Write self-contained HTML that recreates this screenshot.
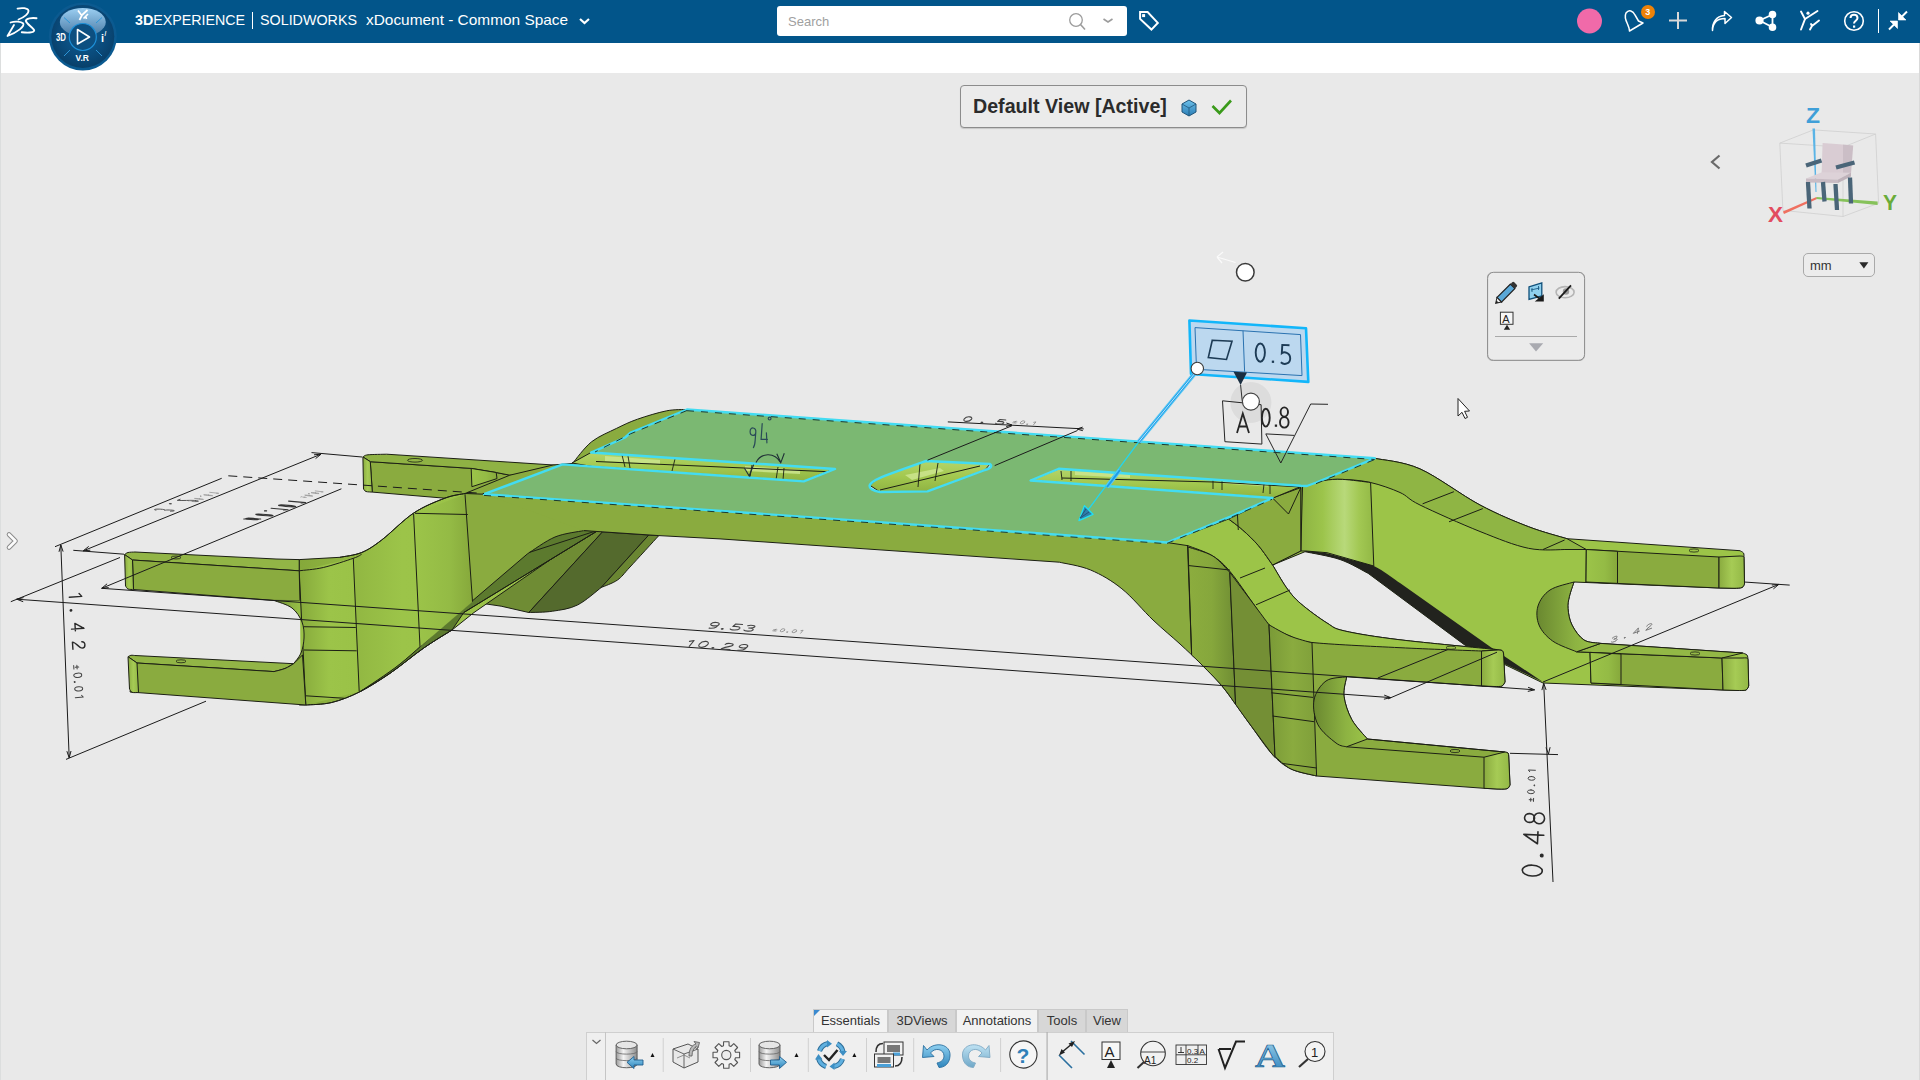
<!DOCTYPE html>
<html><head><meta charset="utf-8">
<style>
*{margin:0;padding:0;box-sizing:border-box}
html,body{width:1920px;height:1080px;overflow:hidden;background:#e9e9e9;font-family:"Liberation Sans",sans-serif}
#hdr{position:absolute;left:0;top:0;width:1920px;height:43px;background:#02558a}
#wbar{position:absolute;left:0;top:43px;width:1920px;height:30px;background:#fff}
.abs{position:absolute}
.t{position:absolute;color:#fff;font-size:16px;white-space:nowrap;line-height:16px}
#search{position:absolute;left:777px;top:6px;width:350px;height:30px;background:#fff;border-radius:3px}
#search span{position:absolute;left:11px;top:8px;font-size:13px;color:#a0a0a0}
#dv{position:absolute;left:960px;top:85px;width:287px;height:43px;border:1px solid #8c8c8c;border-radius:4px;background:#ebebeb;box-shadow:0 1px 1px rgba(0,0,0,0.15)}
#dv span{position:absolute;left:12px;top:9px;font-size:20px;font-weight:bold;color:#2b2b2b;transform:scaleX(0.982);transform-origin:0 0;white-space:nowrap}
#tabs{position:absolute;left:813px;top:1009px;height:23px}
.tab{position:absolute;top:0;height:23px;font-size:13px;color:#333;padding-top:3px;text-align:center;border:1px solid #c9c9c9;border-bottom:none}
#tb{position:absolute;left:586px;top:1032px;width:748px;height:48px;background:#efefef;border:1px solid #cfcfcf;border-bottom:none}
#mm{position:absolute;left:1803px;top:253px;width:72px;height:24px;border:1px solid #a9a9a9;border-radius:5px;background:#ececec}
#mm span{position:absolute;left:6px;top:4px;font-size:13px;color:#333}
#ctx{position:absolute;left:1487px;top:272px;width:98px;height:89px;border:1px solid #b5b5b5;border-radius:5px;background:#ececec}
</style></head><body>
<div id="hdr"></div>
<div id="wbar"></div>
<div id="lb" class="abs" style="left:0;top:43px;width:1px;height:1037px;background:#dcdede"></div>
<div class="abs" style="left:1919px;top:43px;width:1px;height:1037px;background:#d9d9d9"></div>
<svg class="abs" style="left:0;top:0" width="1920" height="1080" viewBox="0 0 1920 1080">
<defs>
 <linearGradient id="gBody" x1="0" y1="0" x2="1" y2="0"><stop offset="0" stop-color="#85a83a"/><stop offset="0.35" stop-color="#9cc449"/><stop offset="1" stop-color="#98bf47"/></linearGradient>
 <linearGradient id="gA1" x1="0" y1="0" x2="1" y2="0"><stop offset="0" stop-color="#86a93b"/><stop offset="0.5" stop-color="#9cc449"/><stop offset="1" stop-color="#9ac247"/></linearGradient>
 <linearGradient id="gA2" x1="0" y1="0" x2="1" y2="0"><stop offset="0" stop-color="#9cc449"/><stop offset="0.6" stop-color="#94bb45"/><stop offset="1" stop-color="#86a83b"/></linearGradient>
 <linearGradient id="gCyl" x1="0" y1="0" x2="1" y2="0"><stop offset="0" stop-color="#8db342"/><stop offset="0.3" stop-color="#9cc44b"/><stop offset="0.6" stop-color="#b8d97a"/><stop offset="0.8" stop-color="#a2c853"/><stop offset="1" stop-color="#92b845"/></linearGradient>
 <linearGradient id="gFR1" x1="0" y1="0" x2="1" y2="0"><stop offset="0" stop-color="#8cad3e"/><stop offset="0.5" stop-color="#86a73c"/><stop offset="1" stop-color="#6f8d33"/></linearGradient>
 <linearGradient id="gFR3" x1="0" y1="0" x2="1" y2="0"><stop offset="0" stop-color="#7a9a37"/><stop offset="0.5" stop-color="#8aab3f"/><stop offset="1" stop-color="#7f9f3a"/></linearGradient>
 <linearGradient id="gU" x1="0" y1="0" x2="1" y2="0"><stop offset="0" stop-color="#6a8830"/><stop offset="0.6" stop-color="#8db342"/><stop offset="1" stop-color="#9cc448"/></linearGradient>
 <linearGradient id="gCap" x1="0" y1="0" x2="1" y2="0"><stop offset="0" stop-color="#8aab3f"/><stop offset="0.5" stop-color="#a6cb55"/><stop offset="1" stop-color="#93b846"/></linearGradient>
 <linearGradient id="gSlot" x1="0" y1="0" x2="0" y2="1"><stop offset="0" stop-color="#b4d46a"/><stop offset="0.5" stop-color="#a3c84f"/><stop offset="1" stop-color="#8fb342"/></linearGradient>
</defs>
<g stroke="#1c1f14" stroke-width="1" stroke-linejoin="round">
<path fill="#6f8c34" d="M463.8,612.5 L598.8,530.0 L602.5,531.9 L528.8,612.5 L501.2,606.2 L485.0,603.8 Z"/>
<path fill="#546a2d" d="M602.5,531.9 L648.8,535.0 L601.2,587.5 L601.2,587.5 C597.3,590.4 585.6,601.0 577.5,605.0 C569.4,609.0 560.6,610.0 552.5,611.2 C544.4,612.5 532.7,612.3 528.8,612.5 Z"/>
<path fill="#6a8632" d="M648.8,535.0 L658.8,535.6 L658.8,535.6 C654.0,540.8 636.9,559.6 630.0,567.0 C623.1,574.4 622.3,576.6 617.5,580.0 C612.7,583.4 604.0,586.2 601.2,587.5 Z"/>
<path fill="#8aab3f" d="M370.3,461.7 L471.2,468.4 L496.2,472.5 L509.8,475.2 L600.0,480.0 L600.0,505.0 L444.8,498.2 L372.3,492.1 Z"/>
<path fill="#8fb244" d="M362.9,456.9 C363.8,456.5 364.1,455.2 368.0,454.8 C371.9,454.4 383.5,454.3 386.6,454.2 L600.0,468.0 L600.0,478.0 L509.8,475.2 L496.2,472.5 L471.2,468.4 L370.3,461.7 Z"/>
<path fill="url(#gCap)" d="M362.9,456.9 L363.5,489.0 L363.5,489.0 C363.9,489.4 364.5,491.0 366.0,491.5 C367.5,492.0 371.2,492.0 372.3,492.1 L370.3,461.7 Z"/>
<path fill="url(#gA2)" d="M471.2,468.4 L496.2,472.5 L497.0,478.6 L471.9,486.7 Z"/>
<ellipse cx="415" cy="460.3" rx="7.5" ry="1.8" fill="#93b646" stroke-width="0.8"/>
<path fill="#9cc448" d="M1200.0,456.0 L1340.0,456.0 L1374.7,458.3 C1382.2,460.1 1402.5,461.1 1420.0,468.9 C1437.5,476.7 1461.9,495.4 1480.0,505.0 C1498.1,514.6 1514.0,521.1 1528.5,526.7 C1543.0,532.3 1560.6,536.7 1567.0,538.7 L1740.0,550.7 L1740.0,550.7 C1740.6,551.1 1742.8,552.0 1743.5,553.0 C1744.2,554.0 1743.9,556.3 1744.0,557.0 L1744.5,584.0 L1744.5,584.0 C1744.1,584.6 1743.6,586.8 1742.0,587.5 C1740.4,588.2 1736.2,588.2 1735.0,588.3 L1719.0,588.0 L1574.0,582.0 L1574.0,582.0 C1573.2,584.4 1570.4,592.1 1569.4,596.5 C1568.4,600.9 1567.6,603.8 1568.0,608.5 C1568.4,613.2 1569.3,619.8 1572.0,625.0 C1574.7,630.2 1579.2,636.9 1584.0,640.0 C1588.8,643.1 1597.9,642.8 1600.7,643.4 L1742.7,653.0 L1742.7,653.0 C1743.4,653.3 1746.1,654.0 1747.0,655.0 C1747.9,656.0 1747.8,658.3 1748.0,659.0 L1748.7,686.0 L1748.7,686.0 C1748.2,686.7 1747.8,689.2 1746.0,690.0 C1744.2,690.8 1739.3,690.4 1738.0,690.5 L1723.0,690.0 L1543.0,683.0 L1465.7,645.7 L1368.1,573.3 L1368.1,573.3 C1363.4,571.0 1350.5,563.1 1340.0,559.5 C1329.5,555.9 1310.8,553.0 1305.0,551.7 L1272.6,565.0 L1200.0,560.0 Z"/>
<path fill="#8fb544" d="M1302.5,486.9 C1306.0,485.8 1317.1,481.9 1323.8,480.6 C1330.4,479.4 1334.7,479.1 1342.5,479.4 C1350.3,479.7 1361.0,480.3 1370.6,482.5 C1380.2,484.7 1391.8,488.8 1400.0,492.5 C1408.2,496.2 1406.7,498.5 1420.0,505.0 C1433.3,511.5 1461.9,524.3 1480.0,531.5 C1498.1,538.7 1514.0,545.3 1528.5,548.3 C1543.0,551.3 1560.6,549.3 1567.0,549.5 L1586.3,549.5 L1567.0,538.7 L1567.0,538.7 C1560.6,536.7 1543.0,532.3 1528.5,526.7 C1514.0,521.1 1498.1,514.6 1480.0,505.0 C1461.9,495.4 1437.5,476.7 1420.0,468.9 C1402.5,461.1 1382.2,460.1 1374.7,458.3 L1316.2,482.5 Z"/>
<path fill="#8aab3f" d="M1586.3,549.5 L1719.0,557.0 L1719.0,588.0 L1586.0,582.0 Z"/>
<path fill="url(#gA2)" d="M1586.3,549.5 L1617.5,551.3 L1617.5,583.4 L1586.0,582.0 Z"/>
<path fill="#8aab3f" d="M1590.0,652.4 L1722.0,658.0 L1723.0,690.0 L1591.0,683.0 Z"/>
<path fill="none" d="M1576.6,651.8 L1590.0,652.4"/>
<path fill="#93b846" d="M1576.6,651.8 L1600.7,643.4 L1742.7,653.0 L1722.0,658.0 Z"/>
<path fill="url(#gA2)" d="M1590.0,652.4 L1621.0,654.0 L1621.0,684.5 L1591.0,683.0 Z"/>
<path fill="url(#gCap)" d="M1719.0,557.0 L1740.0,556.0 L1740.0,556.0 C1740.6,556.1 1742.8,556.0 1743.5,556.5 C1744.2,557.0 1743.9,558.6 1744.0,559.0 L1744.5,584.0 L1744.5,584.0 C1744.1,584.6 1743.6,586.8 1742.0,587.5 C1740.4,588.2 1736.2,588.2 1735.0,588.3 L1719.0,588.0 Z"/>
<path fill="url(#gCap)" d="M1722.0,658.0 L1742.0,658.0 L1742.0,658.0 C1742.8,658.0 1746.0,657.7 1747.0,658.0 C1748.0,658.3 1747.8,659.7 1748.0,660.0 L1748.7,686.0 L1748.7,686.0 C1748.2,686.7 1747.8,689.2 1746.0,690.0 C1744.2,690.8 1739.3,690.4 1738.0,690.5 L1723.0,690.0 Z"/>
<path fill="url(#gU)" d="M1574.0,582.0 C1570.0,583.3 1556.0,586.0 1550.0,590.0 C1544.0,594.0 1539.8,600.2 1538.0,606.0 C1536.2,611.8 1536.6,619.2 1539.0,625.0 C1541.4,630.8 1546.3,636.5 1552.6,641.0 C1558.9,645.5 1572.6,650.0 1576.6,651.8 L1600.7,643.4 L1600.7,643.4 C1597.9,642.8 1588.8,643.1 1584.0,640.0 C1579.2,636.9 1574.7,630.2 1572.0,625.0 C1569.3,619.8 1568.4,613.2 1568.0,608.5 C1567.6,603.8 1568.4,600.9 1569.4,596.5 C1570.4,592.1 1573.2,584.4 1574.0,582.0 Z"/>
<path fill="#22231e" stroke="none" d="M1306.7,550.8 C1310.0,551.2 1319.2,551.8 1326.7,553.3 C1334.2,554.8 1343.8,557.9 1351.7,560.0 C1359.7,562.1 1366.4,562.4 1374.4,566.2 C1382.5,570.0 1395.7,580.2 1400.0,583.0 L1490.9,647.3 L1543.0,682.0 L1465.7,645.7 L1368.1,573.3 L1368.1,573.3 C1363.4,571.0 1350.5,563.1 1340.0,559.5 C1329.5,555.9 1310.8,553.0 1305.0,551.7 Z"/>
<path fill="url(#gCyl)" d="M1302.5,486.9 C1306.0,485.8 1317.1,481.9 1323.8,480.6 C1330.4,479.4 1334.7,479.1 1342.5,479.4 C1350.3,479.7 1365.9,482.0 1370.6,482.5 L1373.8,566.0 L1327.0,552.7 L1306.0,551.0 L1300.8,551.0 Z"/>
<path fill="none" d="M1422.6,503.8 L1453.9,491.7"/>
<path fill="none" d="M1449.0,521.8 L1482.8,508.6"/>
<path fill="none" d="M1543.0,549.5 L1564.6,540.0"/>
<ellipse cx="1694" cy="550.5" rx="5" ry="1.6" fill="none" stroke-width="0.8"/>
<ellipse cx="1695" cy="653.5" rx="5" ry="1.6" fill="none" stroke-width="0.8"/>
<path fill="url(#gBody)" d="M299.2,559.6 L340.0,557.3 C343.6,556.5 354.8,555.4 361.7,552.5 C368.6,549.6 373.0,546.6 381.7,540.0 C390.4,533.4 403.1,520.1 413.6,513.1 C424.1,506.1 436.2,501.5 444.8,498.2 C453.4,494.9 461.6,494.3 465.0,493.5 L485.0,494.2 L584.0,530.6 L592.0,530.8 L474.0,612.5 L452.0,630.0 L452.0,630.0 C447.2,633.0 433.6,641.1 423.3,648.3 C413.0,655.5 400.6,666.1 390.0,673.3 C379.4,680.5 369.7,686.8 360.0,691.7 C350.3,696.6 340.7,700.3 331.7,702.5 C322.7,704.7 310.1,704.6 305.8,705.0 L299.2,705.0 Z"/>
<path fill="#8aab3f" stroke="none" d="M465.0,494.0 L485.0,494.2 L598.8,530.0 L463.8,612.5 L472.5,601.7 Z"/>
<path fill="#5c7a2e" d="M440.0,628.5 L527.5,553.8 L527.5,553.8 C532.1,551.0 545.6,540.9 555.0,537.0 C564.4,533.1 579.0,531.7 583.8,530.6 L598.8,530.0 L463.8,612.5 L452.0,630.0 L452.0,630.0 C447.2,633.0 433.6,641.1 423.3,648.3 C413.0,655.5 400.6,666.1 390.0,673.3 C379.4,680.5 365.0,688.6 360.0,691.7 L360.0,691.7 C366.7,687.1 386.7,674.5 400.0,664.0 C413.3,653.5 433.3,634.4 440.0,628.5 Z"/>
<path fill="url(#gA1)" stroke="none" d="M299.2,570.8 L353.3,558.3 L359.0,691.7 L305.8,705.0 Z"/>
<path fill="none" d="M529.0,552.5 L598.8,530.0"/>
<path fill="none" d="M463.8,612.5 L598.8,530.0"/>
<path fill="url(#gA2)" stroke="none" d="M415.0,513.5 L465.0,494.2 L472.5,601.7 L420.0,646.7 Z"/>
<path fill="none" d="M299.2,570.8 L305.8,705.0"/>
<path fill="none" d="M353.3,558.3 L359.2,691.7"/>
<path fill="none" d="M413.6,513.8 L420.0,646.7"/>
<path fill="none" d="M465.0,494.2 L472.5,601.7"/>
<path fill="none" d="M415.0,513.3 L467.8,514.5"/>
<path fill="none" d="M302.5,626.7 L355.8,627.5"/>
<path fill="none" d="M304.0,650.0 L356.7,650.8"/>
<path fill="none" d="M305.8,695.8 L345.0,698.3"/>
<path fill="none" d="M299.2,570.8 C303.2,570.2 314.3,569.6 323.3,567.5 C332.3,565.4 346.9,560.5 353.3,558.3 C359.7,556.1 360.3,554.9 361.7,554.2"/>
<path fill="none" d="M340.0,557.3 C343.6,556.5 354.8,555.4 361.7,552.5 C368.6,549.6 373.0,546.6 381.7,540.0 C390.4,533.4 403.1,520.1 413.6,513.1 C424.1,506.1 436.2,501.5 444.8,498.2 C453.4,494.9 461.6,494.3 465.0,493.5"/>
<path fill="none" d="M305.8,705.0 C310.1,704.6 322.7,704.7 331.7,702.5 C340.7,700.3 350.3,696.6 360.0,691.7 C369.7,686.8 379.4,680.5 390.0,673.3 C400.6,666.1 413.0,655.5 423.3,648.3 C433.6,641.1 447.2,633.0 452.0,630.0"/>
<path fill="#92b546" d="M124.6,554.6 C125.2,554.2 126.3,552.9 128.0,552.5 C129.7,552.1 133.8,552.1 135.0,552.0 L276.0,559.0 L299.2,559.6 L299.2,570.8 L132.5,560.0 Z"/>
<path fill="#8aab3f" d="M132.5,560.0 L299.2,570.8 L300.0,600.6 L274.0,600.4 L133.5,589.5 Z"/>
<path fill="url(#gCap)" d="M124.6,554.6 L132.5,560.0 L133.5,589.5 L133.5,589.5 C132.6,589.4 129.3,589.6 128.0,589.0 C126.7,588.4 125.9,586.5 125.5,586.0 Z"/>
<path fill="#e9e9e9" stroke="none" d="M274.0,600.4 L274.0,600.4 C277.0,601.7 287.3,604.4 292.0,608.0 C296.7,611.6 300.0,617.0 302.0,622.0 C304.0,627.0 304.2,632.8 304.0,638.0 C303.8,643.2 302.7,648.7 301.0,653.0 C299.3,657.3 294.8,661.9 293.6,663.7 L274.0,671.6 L262.0,671.0 Z"/>
<path fill="url(#gU)" stroke="none" d="M274.0,600.4 C277.0,601.7 287.3,604.4 292.0,608.0 C296.7,611.6 300.0,617.0 302.0,622.0 C304.0,627.0 304.2,632.8 304.0,638.0 C303.8,643.2 302.7,648.7 301.0,653.0 C299.3,657.3 294.8,661.9 293.6,663.7 L300.5,663.0 L300.0,600.6 Z"/>
<path fill="none" d="M274.0,600.4 C277.0,601.7 287.3,604.4 292.0,608.0 C296.7,611.6 300.0,617.0 302.0,622.0 C304.0,627.0 304.2,632.8 304.0,638.0 C303.8,643.2 302.7,648.7 301.0,653.0 C299.3,657.3 294.8,661.9 293.6,663.7"/>
<path fill="#92b546" d="M128.0,656.7 C128.5,656.5 129.8,655.5 131.0,655.3 C132.2,655.1 134.3,655.5 135.0,655.5 L293.6,663.7 L293.6,663.7 C292.2,664.5 288.3,667.2 285.0,668.5 C281.7,669.8 275.8,671.1 274.0,671.6 L137.0,663.0 Z"/>
<path fill="#8aab3f" d="M137.0,663.0 L274.0,671.6 L274.0,671.6 C275.8,671.1 281.7,669.8 285.0,668.5 C288.3,667.2 292.2,664.5 293.6,663.7 L302.5,655.0 L305.8,705.0 L130.0,692.0 Z"/>
<path fill="url(#gCap)" d="M128.0,656.7 L137.0,663.0 L138.5,692.5 L138.5,692.5 C137.4,692.5 133.5,692.9 132.0,692.3 C130.5,691.7 129.9,689.5 129.5,689.0 Z"/>
<ellipse cx="176" cy="557.5" rx="5" ry="1.5" fill="none" stroke-width="0.8"/>
<ellipse cx="181" cy="661.3" rx="5" ry="1.5" fill="none" stroke-width="0.8"/>
<path fill="#8aab3f" d="M465.0,493.5 L509.8,475.2 L553.0,465.0 L572.5,463.4 L572.5,463.4 C575.7,459.8 584.3,447.5 591.7,441.7 C599.1,435.9 609.1,432.1 616.7,428.3 C624.3,424.6 629.2,422.1 637.5,419.2 C645.8,416.3 658.5,412.4 666.7,410.8 C675.0,409.2 683.6,409.7 687.0,409.5 L630.8,432.5 L625.0,437.5 L595.0,450.8 L591.0,452.5 L592.8,466.6 L562.6,464.4 L484.0,494.2 Z"/>
<path fill="#8aab3f" stroke="none" d="M485.0,494.2 L1167.0,542.5 L1230.4,516.6 L1272.6,498.0 L1300.8,487.6 L1300.8,551.0 L1272.6,565.0 L1272.6,565.0 C1274.9,568.8 1282.0,581.5 1286.7,588.0 C1291.4,594.5 1294.1,597.9 1300.8,603.7 C1307.5,609.5 1319.7,618.5 1327.0,623.0 C1334.3,627.5 1332.6,628.2 1344.8,631.0 C1357.0,633.8 1374.6,636.7 1400.0,639.8 C1425.4,642.9 1480.8,648.0 1497.0,649.6 L1497.0,649.6 C1497.8,649.8 1500.9,649.9 1502.0,650.5 C1503.1,651.1 1503.2,652.6 1503.5,653.0 L1505.0,682.0 L1505.0,682.0 C1504.5,682.7 1503.7,685.2 1502.0,686.0 C1500.3,686.8 1496.2,686.4 1495.0,686.5 L1481.5,686.0 L1346.6,676.8 L1346.6,676.8 C1346.2,680.0 1343.1,689.2 1344.0,696.3 C1344.9,703.4 1347.9,712.5 1351.8,719.6 C1355.7,726.7 1364.8,735.8 1367.4,739.0 L1504.8,752.0 L1504.8,752.0 C1505.3,752.2 1507.3,752.3 1508.0,753.0 C1508.7,753.7 1508.6,755.5 1508.7,756.0 L1510.0,785.0 L1510.0,785.0 C1509.5,785.6 1509.2,788.0 1507.0,788.7 C1504.8,789.4 1498.7,789.0 1497.0,789.0 L1484.0,788.3 L1316.6,776.0 L1316.6,776.0 C1312.3,774.8 1298.4,772.7 1291.0,769.0 C1283.6,765.3 1279.0,761.7 1272.0,754.0 C1265.0,746.3 1257.3,734.3 1249.0,723.0 C1240.7,711.7 1230.2,696.0 1222.0,686.0 C1213.8,676.0 1207.0,670.0 1200.0,663.0 C1193.0,656.0 1187.8,651.2 1180.0,644.0 C1172.2,636.8 1162.7,629.2 1153.0,620.0 C1143.3,610.8 1132.3,597.1 1121.9,588.8 C1111.5,580.4 1101.0,574.4 1090.6,570.0 C1080.2,565.6 1064.6,563.5 1059.4,562.2 L720.0,538.9 L658.8,535.6 L583.8,530.6 Z"/>
<path fill="none" d="M485.0,494.2 L1167.0,542.5 L1230.4,516.6 L1272.6,498.0 L1300.8,487.6 L1300.8,551.0 L1272.6,565.0 L1272.6,565.0 C1274.9,568.8 1282.0,581.5 1286.7,588.0 C1291.4,594.5 1294.1,597.9 1300.8,603.7 C1307.5,609.5 1319.7,618.5 1327.0,623.0 C1334.3,627.5 1332.6,628.2 1344.8,631.0 C1357.0,633.8 1374.6,636.7 1400.0,639.8 C1425.4,642.9 1480.8,648.0 1497.0,649.6 L1497.0,649.6 C1497.8,649.8 1500.9,649.9 1502.0,650.5 C1503.1,651.1 1503.2,652.6 1503.5,653.0 L1505.0,682.0 L1505.0,682.0 C1504.5,682.7 1503.7,685.2 1502.0,686.0 C1500.3,686.8 1496.2,686.4 1495.0,686.5 L1481.5,686.0 L1346.6,676.8 L1346.6,676.8 C1346.2,680.0 1343.1,689.2 1344.0,696.3 C1344.9,703.4 1347.9,712.5 1351.8,719.6 C1355.7,726.7 1364.8,735.8 1367.4,739.0 L1504.8,752.0 L1504.8,752.0 C1505.3,752.2 1507.3,752.3 1508.0,753.0 C1508.7,753.7 1508.6,755.5 1508.7,756.0 L1510.0,785.0 L1510.0,785.0 C1509.5,785.6 1509.2,788.0 1507.0,788.7 C1504.8,789.4 1498.7,789.0 1497.0,789.0 L1484.0,788.3 L1316.6,776.0 L1316.6,776.0 C1312.3,774.8 1298.4,772.7 1291.0,769.0 C1283.6,765.3 1279.0,761.7 1272.0,754.0 C1265.0,746.3 1257.3,734.3 1249.0,723.0 C1240.7,711.7 1230.2,696.0 1222.0,686.0 C1213.8,676.0 1207.0,670.0 1200.0,663.0 C1193.0,656.0 1187.8,651.2 1180.0,644.0 C1172.2,636.8 1162.7,629.2 1153.0,620.0 C1143.3,610.8 1132.3,597.1 1121.9,588.8 C1111.5,580.4 1101.0,574.4 1090.6,570.0 C1080.2,565.6 1064.6,563.5 1059.4,562.2 L720.0,538.9 L658.8,535.6 L583.8,530.6"/>
<path fill="#9cc448" d="M1167.0,542.5 L1228.6,519.0 C1230.9,520.8 1237.7,525.5 1242.7,530.0 C1247.7,534.5 1253.5,539.9 1258.5,545.7 C1263.5,551.5 1270.2,561.8 1272.6,565.0 L1272.6,565.0 C1274.9,568.8 1282.0,581.5 1286.7,588.0 C1291.4,594.5 1294.1,597.9 1300.8,603.7 C1307.5,609.5 1319.7,618.5 1327.0,623.0 C1334.3,627.5 1332.6,628.2 1344.8,631.0 C1357.0,633.8 1374.6,636.7 1400.0,639.8 C1425.4,642.9 1480.8,648.0 1497.0,649.6 L1481.5,651.0 L1481.5,651.0 C1467.9,650.5 1428.4,649.1 1400.0,647.7 C1371.6,646.3 1329.6,644.4 1311.3,642.4 C1293.0,640.4 1297.0,638.9 1290.0,636.0 C1283.0,633.1 1275.1,630.2 1269.0,624.8 C1262.9,619.4 1259.7,612.5 1253.3,603.7 C1246.9,594.9 1237.2,580.0 1230.4,572.0 C1223.7,564.0 1219.9,560.4 1212.8,556.0 C1205.7,551.6 1192.1,547.4 1188.0,545.7 Z"/>
<path fill="#8aab3f" d="M1228.6,519.0 C1230.9,520.8 1237.7,525.5 1242.7,530.0 C1247.7,534.5 1253.5,539.9 1258.5,545.7 C1263.5,551.5 1270.2,561.8 1272.6,565.0 L1300.8,551.0 L1300.8,487.6 L1288.5,514.0 L1272.6,498.0 Z"/>
<path fill="url(#gFR1)" d="M1188.0,547.0 L1188.0,547.0 C1192.1,548.5 1205.8,551.8 1212.8,556.0 C1219.8,560.2 1227.0,569.7 1229.8,572.4 L1235.6,704.4 L1235.6,704.4 C1233.3,701.3 1227.9,692.9 1222.0,686.0 C1216.1,679.1 1205.1,668.2 1200.0,663.0 C1194.9,657.8 1193.0,656.3 1191.6,655.0 Z"/>
<path fill="#748f35" d="M1229.8,572.4 C1233.7,577.6 1246.8,595.0 1253.3,603.7 C1259.8,612.4 1266.4,621.3 1269.0,624.8 L1275.0,756.4 L1275.0,756.4 C1274.5,756.0 1276.3,759.6 1272.0,754.0 C1267.7,748.4 1255.1,731.3 1249.0,723.0 C1242.9,714.7 1237.8,707.5 1235.6,704.4 Z"/>
<path fill="url(#gFR3)" d="M1269.0,624.8 C1272.5,626.7 1282.8,633.0 1290.0,636.0 C1297.2,639.0 1308.3,641.7 1312.0,642.8 L1316.6,776.0 L1316.6,776.0 C1312.3,774.8 1297.9,772.3 1291.0,769.0 C1284.1,765.7 1277.7,758.5 1275.0,756.4 Z"/>
<path fill="url(#gCap)" d="M1481.5,651.0 L1498.0,650.0 L1498.0,650.0 C1498.7,650.1 1501.1,650.0 1502.0,650.5 C1502.9,651.0 1503.2,652.6 1503.5,653.0 L1505.0,682.0 L1505.0,682.0 C1504.5,682.7 1503.7,685.2 1502.0,686.0 C1500.3,686.8 1496.2,686.4 1495.0,686.5 L1481.5,686.0 Z"/>
<path fill="url(#gCap)" d="M1484.0,757.2 L1504.8,752.0 L1504.8,752.0 C1505.3,752.2 1507.3,752.3 1508.0,753.0 C1508.7,753.7 1508.6,755.5 1508.7,756.0 L1510.0,785.0 L1510.0,785.0 C1509.5,785.6 1509.2,788.0 1507.0,788.7 C1504.8,789.4 1498.7,789.0 1497.0,789.0 L1484.0,788.3 Z"/>
<path fill="url(#gU)" d="M1346.6,676.8 C1343.2,677.5 1331.4,677.1 1326.0,681.0 C1320.6,684.9 1315.3,692.7 1314.0,700.0 C1312.7,707.3 1314.3,717.6 1318.0,724.8 C1321.7,732.0 1331.2,739.3 1336.0,743.0 C1340.8,746.7 1344.8,746.2 1346.6,746.8 L1367.4,739.0 L1367.4,739.0 C1364.8,735.8 1355.7,726.7 1351.8,719.6 C1347.9,712.5 1344.9,703.4 1344.0,696.3 C1343.1,689.2 1346.2,680.0 1346.6,676.8 Z"/>
<path fill="none" d="M1187.5,545.0 L1191.6,653.4"/>
<path fill="none" d="M1188.0,565.5 L1229.8,570.0"/>
<path fill="none" d="M1271.4,692.8 L1313.0,697.4"/>
<path fill="none" d="M1272.6,716.0 L1314.0,721.7"/>
<path fill="none" d="M1282.0,763.4 L1316.6,768.0"/>
<path fill="none" d="M1237.4,514.0 L1238.3,530.0"/>
<path fill="none" d="M1346.6,746.8 L1484.0,757.2"/>
<path fill="none" d="M1367.4,739.0 L1504.8,752.0"/>
<path fill="none" d="M1256.0,604.8 L1290.0,590.0"/>
<path fill="none" d="M1240.0,578.0 L1265.0,568.0"/>
<ellipse cx="1451" cy="647.7" rx="5" ry="1.6" fill="none" stroke-width="0.8"/>
<ellipse cx="1455" cy="751" rx="5" ry="1.6" fill="none" stroke-width="0.8"/>
<path fill="url(#gSlot)" d="M572.0,463.0 L591.0,452.5 L835.0,468.5 L803.8,481.4 L747.5,477.5 L592.8,466.6 Z"/>
<path fill="url(#gSlot)" d="M1030.6,480.5 L1058.8,468.8 L1307.0,484.0 L1273.0,498.0 Z"/>
<path fill="url(#gSlot)" d="M869.7,485.2 L880.0,477.0 L926.0,461.0 L990.0,464.0 L985.0,470.0 L927.5,491.4 L880.0,492.0 Z"/>
<g stroke="none" fill="#cde68f" opacity="0.85">
<path d="M605,456 L660,460 L660,464 L605,461 Z"/><path d="M745,466 L800,470 L800,474 L745,471 Z"/>
<path d="M1075,471 L1130,474.5 L1130,478 L1075,475 Z"/><path d="M1223,480 L1268,483 L1268,486.5 L1223,483.5 Z"/>
<path d="M905,475 L940,468 L944,471 L912,480 Z"/>
</g>
<path fill="none" d="M596.0,461.5 L835.0,472.0"/>
<path fill="none" d="M1062.0,478.0 L1213.8,482.0 L1301.0,487.0"/>
<path fill="none" d="M880.0,490.0 L980.0,466.0"/>
<path fill="none" stroke-width="0.9" d="M622.0,455.0 L625.0,467.0"/>
<path fill="none" stroke-width="0.9" d="M628.0,456.0 L630.0,468.0"/>
<path fill="none" stroke-width="0.9" d="M675.0,459.0 L672.0,471.0"/>
<path fill="none" stroke-width="0.9" d="M752.0,465.0 L750.0,477.0"/>
<path fill="none" stroke-width="0.9" d="M778.0,467.0 L776.0,480.0"/>
<path fill="none" stroke-width="0.9" d="M784.0,468.0 L783.0,480.0"/>
<path fill="none" stroke-width="0.9" d="M1061.0,471.0 L1062.0,480.0"/>
<path fill="none" stroke-width="0.9" d="M1071.0,471.0 L1071.0,481.0"/>
<path fill="none" stroke-width="0.9" d="M1213.0,480.0 L1213.0,489.0"/>
<path fill="none" stroke-width="0.9" d="M1222.0,481.0 L1222.0,490.0"/>
<path fill="none" stroke-width="0.9" d="M1264.0,484.0 L1263.0,493.0"/>
<path fill="none" stroke-width="0.9" d="M1270.0,484.0 L1270.0,494.0"/>
<path fill="none" stroke-width="0.9" d="M920.0,464.0 L918.0,487.0"/>
<path fill="none" stroke-width="0.9" d="M938.0,463.0 L935.0,481.0"/>
<path fill="#7bb872" stroke="#43dcf2" stroke-width="2.4" fill-rule="evenodd" d="M484,494.2 L562.6,464.4 L592.8,466.6 L747.5,477.5 L803.8,481.4 L835,469 L591,452.5 L595,450.8 L625,437.5 L630.8,432.5 L687,409.5 L1374.7,458.3 L1316.25,482.5 L1306.9,486 L1300.8,485.8 L1058.75,468.75 L1030.6,480.5 L1272.6,498 L1230.4,516.6 L1167,542.5 Z M869.7,485.2 C872,480 878,478 926,461 L990,464 C993,466 990,469 985,470 L927.5,491.4 L880,492 C872,491 869,488 869.7,485.2 Z"/>
<path fill="none" stroke="#1c3a30" stroke-width="1" stroke-dasharray="7 7" d="M484,495.4 L1167,543.7 M687,410.7 L1374.7,459.5 M1374,459.8 L1316,483.7 M1167,543.4 L1230,517.8 L1272,499.3 M687,410.5 L630.8,433.7 L595,452"/>
</g>
</svg>
<div class="t" style="left:135px;top:12px;font-size:15px;transform:scaleX(0.95);transform-origin:0 0"><b>3D</b>EXPERIENCE</div>
<div class="abs" style="left:251.5px;top:12px;width:1.2px;height:17px;background:#fff"></div>
<div class="t" style="left:260px;top:12px;font-size:15px;transform:scaleX(0.954);transform-origin:0 0">SOLIDWORKS</div>
<div class="t" style="left:366px;top:12px;font-size:15px;transform:scaleX(1.027);transform-origin:0 0">xDocument - Common Space</div>
<div id="search"><span>Search</span></div>
<svg class="abs" style="left:0;top:0" width="1920" height="75" viewBox="0 0 1920 75">
 <defs>
  <radialGradient id="cmpBody" cx="0.5" cy="0.45" r="0.55">
   <stop offset="0" stop-color="#0f5f97"/><stop offset="0.7" stop-color="#0a4a7a"/><stop offset="1" stop-color="#083f69"/>
  </radialGradient>
  <linearGradient id="cmpTop" x1="0" y1="0" x2="0" y2="1">
   <stop offset="0" stop-color="#9ccff2"/><stop offset="0.6" stop-color="#6a9cc4"/><stop offset="1" stop-color="#4a7aa2"/>
  </linearGradient>
 </defs>
 <!-- DS logo -->
 <g fill="none" stroke="#fff" stroke-linecap="round" stroke-linejoin="round">
  <path d="M17.5,8.6 C22,7.5 27.5,8 28.5,10.5 C29,13.5 24,17.5 18.5,19.5" stroke-width="1.8"/>
  <path d="M10.5,22.5 C15,21 21,21.5 23.3,23.5 C24.5,26.5 18,32 7.5,36 L14,25" stroke-width="1.8"/>
  <path d="M36.5,18.3 C32,17.5 26,18.5 25.8,20.8 C26.5,24 33.5,28 34.2,30.5 C34,33 27,32.8 21.8,32.3" stroke-width="1.9"/>
 </g>
 <!-- compass -->
 <circle cx="82.8" cy="36.5" r="34" fill="#0b5a90"/>
 <circle cx="82.8" cy="36.5" r="31.5" fill="url(#cmpBody)"/>
 <ellipse cx="82.8" cy="22" rx="23" ry="14" fill="url(#cmpTop)"/>
 <circle cx="82.8" cy="37" r="13.5" fill="#0d4f80" stroke="#1e90d8" stroke-width="1.2"/>
 <path d="M77.5,29.5 L89.5,37 L77.5,44 Z" fill="none" stroke="#fff" stroke-width="1.6" stroke-linejoin="round"/>
 <g stroke="#2d95d6" stroke-width="1">
  <line x1="64" y1="17.5" x2="70" y2="23"/><line x1="96" y1="23" x2="102" y2="17.5"/>
  <line x1="64" y1="56" x2="70" y2="50"/><line x1="96" y1="50" x2="102" y2="56"/>
 </g>
 <text x="56" y="41" font-family="Liberation Sans" font-weight="bold" font-size="10.5" fill="#fff" textLength="10" lengthAdjust="spacingAndGlyphs">3D</text>
 <text x="101" y="41.5" font-family="Liberation Sans" font-weight="bold" font-size="11" fill="#fff">i</text>
 <text x="104.5" y="36" font-family="Liberation Sans" font-weight="bold" font-size="6.5" fill="#fff">/</text>
 <text x="75.5" y="61" font-family="Liberation Sans" font-weight="bold" font-size="8.5" fill="#fff">V.R</text>
 <path d="M78,10.5 L81.8,15.5 L79.5,20 M81.5,15.5 L87.5,10 M83.5,18.5 L88,14 M85.5,16 L86.5,19" fill="none" stroke="#fff" stroke-width="1.7"/>
 <!-- search icon and chevrons -->
 <circle cx="1076" cy="20" r="6.3" fill="none" stroke="#9c9c9c" stroke-width="1.3"/>
 <line x1="1080.5" y1="24.5" x2="1085" y2="29.5" stroke="#9c9c9c" stroke-width="1.6"/>
 <path d="M1103.5,19 L1108,22 L1112.5,19" fill="none" stroke="#9c9c9c" stroke-width="1.6"/>
 <path d="M580,19 L584.5,23 L589,19" fill="none" stroke="#fff" stroke-width="2.2"/>
 <!-- tag -->
 <path d="M1140.1,12.1 L1147.6,12.1 L1157.8,22.9 L1151.4,29.6 L1140.1,18.9 Z" fill="none" stroke="#fff" stroke-width="2" stroke-linejoin="miter"/>
 <rect x="1142.1" y="14.1" width="3" height="3" fill="#fff"/>
 <!-- pink avatar -->
 <circle cx="1589.5" cy="21" r="12.5" fill="#f06aa9"/>
 <!-- bell -->
 <path d="M1626,13 C1629,9 1633,11 1635,15 L1638.5,21 L1643,23 L1629.5,31 L1629,28 L1627.5,24 C1625.5,20 1624.5,16 1626,13 Z" fill="none" stroke="#fff" stroke-width="1.5" stroke-linejoin="round"/>
 <circle cx="1648" cy="12" r="7" fill="#ee8208"/>
 <text x="1645.3" y="15.3" font-family="Liberation Sans" font-weight="bold" font-size="9" fill="#fff">3</text>
 <!-- plus -->
 <path d="M1669,20.5 H1687 M1678,12 V29" stroke="#d8d8d8" stroke-width="2"/>
 <!-- share arrow -->
 <path d="M1712.5,30.5 C1713,22 1718,18.5 1725,18.5 L1725,23.5 L1731.5,17.5 L1724.5,11.5 L1724.5,15.5 C1716,16 1712,23 1712.5,30.5 Z" fill="none" stroke="#fff" stroke-width="1.5" stroke-linejoin="round"/>
 <!-- network -->
 <g stroke="#fff" stroke-width="1.8" fill="#fff">
  <line x1="1759.5" y1="20.5" x2="1772.5" y2="14.5"/><line x1="1759.5" y1="20.5" x2="1772.5" y2="27.2"/><line x1="1772.5" y1="14.5" x2="1772.5" y2="27.2"/>
  <circle cx="1759.5" cy="20.5" r="3.2"/><circle cx="1772.5" cy="14.5" r="2.9"/><circle cx="1772.5" cy="27.2" r="2.9"/>
 </g>
 <!-- Yy logo -->
 <g fill="none" stroke="#fff" stroke-width="1.9" stroke-linecap="round">
  <path d="M1801,11.5 L1805,19 L1801,29.5"/><path d="M1805,19 L1817.5,11"/>
  <path d="M1811,24 L1812,26 L1810,29.5 M1812,26 L1819,20.5"/>
 </g>
 <circle cx="1808" cy="13.2" r="1.6" fill="#fff"/>
 <!-- help -->
 <circle cx="1854" cy="21" r="9.3" fill="none" stroke="#fff" stroke-width="1.6"/>
 <path d="M1850.5,18 C1850.5,13.5 1857.5,13.5 1857.5,18 C1857.5,20.5 1854,21 1854,23.5" fill="none" stroke="#fff" stroke-width="2"/>
 <rect x="1853" y="25.5" width="2.2" height="2.2" fill="#fff"/>
 <line x1="1878.5" y1="9" x2="1878.5" y2="33" stroke="#fff" stroke-width="1"/>
 <!-- compress -->
 <g fill="#fff" stroke="#fff" stroke-width="2">
  <path d="M1907,11.5 L1900,18.5" fill="none"/><path d="M1898.5,12.5 V20 H1906 Z" stroke-width="0.6"/>
  <path d="M1889,29.5 L1896,22.5" fill="none"/><path d="M1897.5,28.5 V21 H1890 Z" stroke-width="0.6"/>
 </g>
</svg>

<div id="dv"><span>Default View [Active]</span></div>
<div id="mm"><span>mm</span></div>
<div id="ctx"></div>
<div id="tb"></div>
<div id="tabs">
 <div class="tab" style="left:0;width:75px;background:#f2f2f2">Essentials</div>
 <div class="tab" style="left:75px;width:68px;background:#d7d7d7">3DViews</div>
 <div class="tab" style="left:143px;width:82px;background:#f2f2f2">Annotations</div>
 <div class="tab" style="left:225px;width:48px;background:#d7d7d7">Tools</div>
 <div class="tab" style="left:273px;width:42px;background:#d7d7d7">View</div>
</div>
<svg class="abs" style="left:0;top:0" width="1920" height="1080" viewBox="0 0 1920 1080">
<line x1="55" y1="546.7" x2="221.7" y2="478.3" stroke="#1b1b1b" stroke-width="1"/>
<line x1="83.3" y1="550.8" x2="321" y2="454.2" stroke="#1b1b1b" stroke-width="1"/>
<path d="M88.7,546.4 L83.3,550.8 L90.3,550.2" fill="none" stroke="#1b1b1b" stroke-width="1"/>
<path d="M315.6,458.6 L321,454.2 L314.0,454.8" fill="none" stroke="#1b1b1b" stroke-width="1"/>
<line x1="73.3" y1="550.3" x2="124" y2="554.2" stroke="#1b1b1b" stroke-width="1"/>
<line x1="311.5" y1="452.6" x2="362" y2="457" stroke="#1b1b1b" stroke-width="1"/>
<path d="M228.3,475.8 L484,493.5" stroke="#1b1b1b" stroke-width="1" stroke-dasharray="9 6" fill="none"/>
<line x1="10.8" y1="601.7" x2="120" y2="557.5" stroke="#1b1b1b" stroke-width="1"/>
<line x1="101.7" y1="588.3" x2="341.4" y2="488.8" stroke="#1b1b1b" stroke-width="1"/>
<path d="M107.1,583.8 L101.7,588.3 L108.7,587.6" fill="none" stroke="#1b1b1b" stroke-width="1"/>
<line x1="16.7" y1="599.2" x2="1390.7" y2="697.6" stroke="#1b1b1b" stroke-width="1"/>
<path d="M23.5,597.6 L16.7,599.2 L23.2,601.7" fill="none" stroke="#1b1b1b" stroke-width="1"/>
<path d="M1383.9,699.2 L1390.7,697.6 L1384.2,695.1" fill="none" stroke="#1b1b1b" stroke-width="1"/>
<line x1="101.7" y1="588.3" x2="1534.6" y2="689.8" stroke="#1b1b1b" stroke-width="1"/>
<path d="M1527.8,691.4 L1534.6,689.8 L1528.1,687.3" fill="none" stroke="#1b1b1b" stroke-width="1"/>
<line x1="60.8" y1="545" x2="69.2" y2="757.8" stroke="#1b1b1b" stroke-width="1"/>
<path d="M63.1,551.6 L60.8,545 L59.0,551.8" fill="none" stroke="#1b1b1b" stroke-width="1"/>
<path d="M66.9,751.2 L69.2,757.8 L71.0,751.0" fill="none" stroke="#1b1b1b" stroke-width="1"/>
<line x1="66" y1="759.4" x2="206" y2="701.2" stroke="#1b1b1b" stroke-width="1"/>
<g fill="none" stroke="#555" stroke-width="1" color="#555" stroke-linecap="round" stroke-linejoin="round"><g transform="matrix(5.000 -2.000 -20.000 -1.500 153.00 510.00)"><g transform="translate(0 -1)"><path vector-effect="non-scaling-stroke" d="M0.05,0.14 C0.18,-0.05 0.56,-0.02 0.53,0.25 C0.5,0.45 0.32,0.47 0.22,0.47 C0.46,0.47 0.6,0.6 0.58,0.76 C0.54,1.05 0.12,1.05 0.03,0.86"/></g></g><g transform="matrix(5.000 -2.000 -20.000 -1.500 168.75 503.77)"><g transform="translate(0 -1)"><circle vector-effect="non-scaling-stroke" cx="0.08" cy="0.94" r="0.06" fill="currentColor"/></g></g><g transform="matrix(5.000 -2.000 -20.000 -1.500 177.15 500.45)"><g transform="translate(0 -1)"><path vector-effect="non-scaling-stroke" d="M0.05,0.25 C0.05,-0.06 0.56,-0.06 0.56,0.26 C0.56,0.5 0.06,0.7 0.03,1 L0.6,1"/></g></g></g>
<g fill="none" stroke="#999" stroke-width="0.8" color="#999" stroke-linecap="round" stroke-linejoin="round"><g transform="matrix(1.600 -0.600 -9.000 -1.000 188.00 501.00)"><g transform="translate(0 -1)"><path vector-effect="non-scaling-stroke" d="M0.3,0.3 L0.3,0.74 M0.08,0.52 L0.52,0.52 M0.08,0.92 L0.52,0.92"/></g></g><g transform="matrix(1.600 -0.600 -9.000 -1.000 194.00 498.60)"><g transform="translate(0 -1)"><ellipse vector-effect="non-scaling-stroke" cx="0.3" cy="0.5" rx="0.27" ry="0.5"/></g></g><g transform="matrix(1.600 -0.600 -9.000 -1.000 200.00 496.20)"><g transform="translate(0 -1)"><circle vector-effect="non-scaling-stroke" cx="0.08" cy="0.94" r="0.06" fill="currentColor"/></g></g><g transform="matrix(1.600 -0.600 -9.000 -1.000 203.20 494.92)"><g transform="translate(0 -1)"><ellipse vector-effect="non-scaling-stroke" cx="0.3" cy="0.5" rx="0.27" ry="0.5"/></g></g><g transform="matrix(1.600 -0.600 -9.000 -1.000 209.20 492.52)"><g transform="translate(0 -1)"><path vector-effect="non-scaling-stroke" d="M0.1,0.2 L0.34,0 L0.34,1"/></g></g></g>
<g fill="none" stroke="#333" stroke-width="1.1" color="#333" stroke-linecap="round" stroke-linejoin="round"><g transform="matrix(5.000 -2.000 -17.000 -1.500 244.00 519.00)"><g transform="translate(0 -1)"><ellipse vector-effect="non-scaling-stroke" cx="0.32" cy="0.62" rx="0.26" ry="0.36"/><path vector-effect="non-scaling-stroke" d="M0.02,1.02 L0.62,0.2"/></g></g><g transform="matrix(5.000 -2.000 -17.000 -1.500 254.40 514.84)"><g transform="translate(0 -1)"><ellipse vector-effect="non-scaling-stroke" cx="0.3" cy="0.5" rx="0.27" ry="0.5"/></g></g><g transform="matrix(5.000 -2.000 -17.000 -1.500 264.15 510.94)"><g transform="translate(0 -1)"><circle vector-effect="non-scaling-stroke" cx="0.08" cy="0.94" r="0.06" fill="currentColor"/></g></g><g transform="matrix(5.000 -2.000 -17.000 -1.500 269.35 508.86)"><g transform="translate(0 -1)"><path vector-effect="non-scaling-stroke" d="M0.1,0.2 L0.34,0 L0.34,1"/></g></g><g transform="matrix(5.000 -2.000 -17.000 -1.500 277.15 505.74)"><g transform="translate(0 -1)"><ellipse vector-effect="non-scaling-stroke" cx="0.3" cy="0.5" rx="0.27" ry="0.5"/></g></g><g transform="matrix(5.000 -2.000 -17.000 -1.500 286.90 501.84)"><g transform="translate(0 -1)"><path vector-effect="non-scaling-stroke" d="M0.1,0.2 L0.34,0 L0.34,1"/></g></g></g>
<g fill="none" stroke="#999" stroke-width="0.8" color="#999" stroke-linecap="round" stroke-linejoin="round"><g transform="matrix(2.000 -0.800 -8.000 -1.000 300.00 497.00)"><g transform="translate(0 -1)"><path vector-effect="non-scaling-stroke" d="M0.3,0.3 L0.3,0.74 M0.08,0.52 L0.52,0.52 M0.08,0.92 L0.52,0.92"/></g></g><g transform="matrix(2.000 -0.800 -8.000 -1.000 304.12 495.35)"><g transform="translate(0 -1)"><ellipse vector-effect="non-scaling-stroke" cx="0.3" cy="0.5" rx="0.27" ry="0.5"/></g></g><g transform="matrix(2.000 -0.800 -8.000 -1.000 308.25 493.70)"><g transform="translate(0 -1)"><circle vector-effect="non-scaling-stroke" cx="0.08" cy="0.94" r="0.06" fill="currentColor"/></g></g><g transform="matrix(2.000 -0.800 -8.000 -1.000 310.45 492.82)"><g transform="translate(0 -1)"><ellipse vector-effect="non-scaling-stroke" cx="0.3" cy="0.5" rx="0.27" ry="0.5"/></g></g><g transform="matrix(2.000 -0.800 -8.000 -1.000 314.57 491.17)"><g transform="translate(0 -1)"><path vector-effect="non-scaling-stroke" d="M0.1,0.2 L0.34,0 L0.34,1"/></g></g></g>
<g transform="translate(69 593) rotate(86) skewX(0) scale(12.500 12.500)" fill="none" stroke="#2a2a2a" stroke-width="1.4" color="#2a2a2a" stroke-linecap="round" stroke-linejoin="round"><g transform="translate(0.000 -1)"><path vector-effect="non-scaling-stroke" d="M0.1,0.2 L0.34,0 L0.34,1"/></g><g transform="translate(1.320 -1)"><circle vector-effect="non-scaling-stroke" cx="0.08" cy="0.94" r="0.06" fill="currentColor"/></g><g transform="translate(2.440 -1)"><path vector-effect="non-scaling-stroke" d="M0.46,1 L0.46,0 L0.02,0.7 L0.62,0.7"/></g><g transform="translate(3.910 -1)"><path vector-effect="non-scaling-stroke" d="M0.05,0.25 C0.05,-0.06 0.56,-0.06 0.56,0.26 C0.56,0.5 0.06,0.7 0.03,1 L0.6,1"/></g></g>
<g transform="translate(73 665) rotate(86) skewX(0) scale(8.000 8.000)" fill="none" stroke="#444" stroke-width="1" color="#444" stroke-linecap="round" stroke-linejoin="round"><g transform="translate(0.000 -1)"><path vector-effect="non-scaling-stroke" d="M0.3,0.3 L0.3,0.74 M0.08,0.52 L0.52,0.52 M0.08,0.92 L0.52,0.92"/></g><g transform="translate(1.025 -1)"><ellipse vector-effect="non-scaling-stroke" cx="0.3" cy="0.5" rx="0.27" ry="0.5"/></g><g transform="translate(2.050 -1)"><circle vector-effect="non-scaling-stroke" cx="0.08" cy="0.94" r="0.06" fill="currentColor"/></g><g transform="translate(2.725 -1)"><ellipse vector-effect="non-scaling-stroke" cx="0.3" cy="0.5" rx="0.27" ry="0.5"/></g><g transform="translate(3.750 -1)"><path vector-effect="non-scaling-stroke" d="M0.1,0.2 L0.34,0 L0.34,1"/></g></g>
<g transform="translate(707 628) rotate(4.5) skewX(-35) scale(15.400 6.300)" fill="none" stroke="#444" stroke-width="1.1" color="#444" stroke-linecap="round" stroke-linejoin="round"><g transform="translate(0.000 -1)"><path vector-effect="non-scaling-stroke" d="M0.56,0.33 C0.56,-0.1 0.04,-0.1 0.04,0.31 C0.04,0.68 0.56,0.66 0.56,0.3 L0.52,0.72 C0.47,0.96 0.3,1 0.14,1"/></g><g transform="translate(0.893 -1)"><circle vector-effect="non-scaling-stroke" cx="0.08" cy="0.94" r="0.06" fill="currentColor"/></g><g transform="translate(1.436 -1)"><path vector-effect="non-scaling-stroke" d="M0.56,0 L0.12,0 L0.07,0.45 C0.22,0.34 0.6,0.36 0.59,0.69 C0.57,1.05 0.13,1.05 0.03,0.86"/></g><g transform="translate(2.329 -1)"><path vector-effect="non-scaling-stroke" d="M0.05,0.14 C0.18,-0.05 0.56,-0.02 0.53,0.25 C0.5,0.45 0.32,0.47 0.22,0.47 C0.46,0.47 0.6,0.6 0.58,0.76 C0.54,1.05 0.12,1.05 0.03,0.86"/></g></g>
<g transform="translate(772 631) rotate(4.5) skewX(-35) scale(7.200 3.200)" fill="none" stroke="#888" stroke-width="0.8" color="#888" stroke-linecap="round" stroke-linejoin="round"><g transform="translate(0.000 -1)"><path vector-effect="non-scaling-stroke" d="M0.3,0.3 L0.3,0.74 M0.08,0.52 L0.52,0.52 M0.08,0.92 L0.52,0.92"/></g><g transform="translate(1.000 -1)"><ellipse vector-effect="non-scaling-stroke" cx="0.3" cy="0.5" rx="0.27" ry="0.5"/></g><g transform="translate(2.000 -1)"><circle vector-effect="non-scaling-stroke" cx="0.08" cy="0.94" r="0.06" fill="currentColor"/></g><g transform="translate(2.650 -1)"><ellipse vector-effect="non-scaling-stroke" cx="0.3" cy="0.5" rx="0.27" ry="0.5"/></g><g transform="translate(3.650 -1)"><path vector-effect="non-scaling-stroke" d="M0.1,0.2 L0.34,0 L0.34,1"/></g></g>
<g transform="translate(684 646) rotate(4.5) skewX(-35) scale(15.400 6.300)" fill="none" stroke="#444" stroke-width="1.1" color="#444" stroke-linecap="round" stroke-linejoin="round"><g transform="translate(0.000 -1)"><path vector-effect="non-scaling-stroke" d="M0.1,0.2 L0.34,0 L0.34,1"/></g><g transform="translate(0.814 -1)"><ellipse vector-effect="non-scaling-stroke" cx="0.3" cy="0.5" rx="0.27" ry="0.5"/></g><g transform="translate(1.779 -1)"><circle vector-effect="non-scaling-stroke" cx="0.08" cy="0.94" r="0.06" fill="currentColor"/></g><g transform="translate(2.393 -1)"><path vector-effect="non-scaling-stroke" d="M0.05,0.25 C0.05,-0.06 0.56,-0.06 0.56,0.26 C0.56,0.5 0.06,0.7 0.03,1 L0.6,1"/></g><g transform="translate(3.357 -1)"><path vector-effect="non-scaling-stroke" d="M0.56,0.33 C0.56,-0.1 0.04,-0.1 0.04,0.31 C0.04,0.68 0.56,0.66 0.56,0.3 L0.52,0.72 C0.47,0.96 0.3,1 0.14,1"/></g></g>
<line x1="947.8" y1="421.9" x2="1083.75" y2="428.9" stroke="#1b1b1b" stroke-width="1"/>
<path d="M1006.2,426.5 L1012,425 L1006.4,423.0" fill="none" stroke="#1b1b1b" stroke-width="1"/>
<path d="M1082.7,427.1 L1077,429 L1082.8,430.7" fill="none" stroke="#1b1b1b" stroke-width="1"/>
<line x1="927.5" y1="460.2" x2="1011.9" y2="425.8" stroke="#1b1b1b" stroke-width="1"/>
<line x1="994.7" y1="465.6" x2="1077.5" y2="430.5" stroke="#1b1b1b" stroke-width="1"/>
<g transform="translate(962 421) rotate(5) skewX(-35) scale(13.200 4.800)" fill="none" stroke="#444" stroke-width="1.1" color="#444" stroke-linecap="round" stroke-linejoin="round"><g transform="translate(0.000 -1)"><ellipse vector-effect="non-scaling-stroke" cx="0.3" cy="0.5" rx="0.27" ry="0.5"/></g><g transform="translate(1.417 -1)"><circle vector-effect="non-scaling-stroke" cx="0.08" cy="0.94" r="0.06" fill="currentColor"/></g><g transform="translate(2.483 -1)"><path vector-effect="non-scaling-stroke" d="M0.56,0 L0.12,0 L0.07,0.45 C0.22,0.34 0.6,0.36 0.59,0.69 C0.57,1.05 0.13,1.05 0.03,0.86"/></g></g>
<g transform="translate(1012 423) rotate(5) skewX(-35) scale(7.200 3.200)" fill="none" stroke="#888" stroke-width="0.8" color="#888" stroke-linecap="round" stroke-linejoin="round"><g transform="translate(0.000 -1)"><path vector-effect="non-scaling-stroke" d="M0.3,0.3 L0.3,0.74 M0.08,0.52 L0.52,0.52 M0.08,0.92 L0.52,0.92"/></g><g transform="translate(1.000 -1)"><ellipse vector-effect="non-scaling-stroke" cx="0.3" cy="0.5" rx="0.27" ry="0.5"/></g><g transform="translate(2.000 -1)"><circle vector-effect="non-scaling-stroke" cx="0.08" cy="0.94" r="0.06" fill="currentColor"/></g><g transform="translate(2.650 -1)"><path vector-effect="non-scaling-stroke" d="M0.1,0.2 L0.34,0 L0.34,1"/></g></g>
<g fill="none" stroke="#2a4a58" stroke-width="1.2" stroke-linecap="round"><path d="M755.8,432.5 C756.3,427 750.2,426.3 750.1,431.4 C750,436 755.6,437.2 755.8,432 L755.2,440 C755,444 754.3,446.3 753.4,447.6"/><path d="M762.2,423.6 L761.1,439.4 L767.4,439.4 M766.4,432.8 L766.9,442.8"/><circle cx="769.6" cy="418.6" r="1.4"/></g>
<g fill="none" stroke="#1f2f36" stroke-width="1.1"><path d="M756,462.4 C761,453 774,451.5 780.8,462.6"/><path d="M776.8,453.8 L780.8,462.6 L784.3,453.2"/><path d="M744.5,468.2 L749.2,476 L753.6,464.8"/></g>
<line x1="1744" y1="582" x2="1789.7" y2="585.1" stroke="#1b1b1b" stroke-width="1"/>
<line x1="1543" y1="682" x2="1778.8" y2="584.4" stroke="#1b1b1b" stroke-width="1"/>
<path d="M1773.4,588.9 L1778.8,584.4 L1771.8,585.0" fill="none" stroke="#1b1b1b" stroke-width="1"/>
<g transform="translate(1611 643) rotate(-20) skewX(-30) scale(10.800 4.800)" fill="none" stroke="#777" stroke-width="1" color="#777" stroke-linecap="round" stroke-linejoin="round"><g transform="translate(0.000 -1)"><path vector-effect="non-scaling-stroke" d="M0.05,0.14 C0.18,-0.05 0.56,-0.02 0.53,0.25 C0.5,0.45 0.32,0.47 0.22,0.47 C0.46,0.47 0.6,0.6 0.58,0.76 C0.54,1.05 0.12,1.05 0.03,0.86"/></g><g transform="translate(1.250 -1)"><circle vector-effect="non-scaling-stroke" cx="0.08" cy="0.94" r="0.06" fill="currentColor"/></g><g transform="translate(2.150 -1)"><path vector-effect="non-scaling-stroke" d="M0.46,1 L0.46,0 L0.02,0.7 L0.62,0.7"/></g><g transform="translate(3.400 -1)"><path vector-effect="non-scaling-stroke" d="M0.05,0.25 C0.05,-0.06 0.56,-0.06 0.56,0.26 C0.56,0.5 0.06,0.7 0.03,1 L0.6,1"/></g></g>
<line x1="1388" y1="698.9" x2="1497" y2="652.2" stroke="#1b1b1b" stroke-width="1"/>
<line x1="1377.8" y1="678" x2="1447.7" y2="649.6" stroke="#1b1b1b" stroke-width="1"/>
<line x1="1543.7" y1="683.3" x2="1553" y2="882" stroke="#1b1b1b" stroke-width="1"/>
<path d="M1546.1,689.9 L1543.7,683.3 L1541.9,690.1" fill="none" stroke="#1b1b1b" stroke-width="1"/>
<path d="M1546.0,747.5 L1548.5,754 L1550.1,747.2" fill="none" stroke="#1b1b1b" stroke-width="1"/>
<line x1="1510" y1="753.3" x2="1558" y2="754.6" stroke="#1b1b1b" stroke-width="1"/>
<g transform="translate(1542 877) rotate(-87.5) skewX(0) scale(20.000 20.000)" fill="none" stroke="#2a2a2a" stroke-width="1.6" color="#2a2a2a" stroke-linecap="round" stroke-linejoin="round"><g transform="translate(0.000 -1)"><ellipse vector-effect="non-scaling-stroke" cx="0.3" cy="0.5" rx="0.27" ry="0.5"/></g><g transform="translate(0.990 -1)"><circle vector-effect="non-scaling-stroke" cx="0.08" cy="0.94" r="0.06" fill="currentColor"/></g><g transform="translate(1.630 -1)"><path vector-effect="non-scaling-stroke" d="M0.46,1 L0.46,0 L0.02,0.7 L0.62,0.7"/></g><g transform="translate(2.620 -1)"><ellipse vector-effect="non-scaling-stroke" cx="0.3" cy="0.25" rx="0.22" ry="0.25"/><ellipse vector-effect="non-scaling-stroke" cx="0.3" cy="0.73" rx="0.27" ry="0.27"/></g></g>
<g transform="translate(1534 802) rotate(-87.5) skewX(0) scale(7.000 7.000)" fill="none" stroke="#444" stroke-width="1" color="#444" stroke-linecap="round" stroke-linejoin="round"><g transform="translate(0.000 -1)"><path vector-effect="non-scaling-stroke" d="M0.3,0.3 L0.3,0.74 M0.08,0.52 L0.52,0.52 M0.08,0.92 L0.52,0.92"/></g><g transform="translate(1.136 -1)"><ellipse vector-effect="non-scaling-stroke" cx="0.3" cy="0.5" rx="0.27" ry="0.5"/></g><g transform="translate(2.271 -1)"><circle vector-effect="non-scaling-stroke" cx="0.08" cy="0.94" r="0.06" fill="currentColor"/></g><g transform="translate(3.057 -1)"><ellipse vector-effect="non-scaling-stroke" cx="0.3" cy="0.5" rx="0.27" ry="0.5"/></g><g transform="translate(4.193 -1)"><path vector-effect="non-scaling-stroke" d="M0.1,0.2 L0.34,0 L0.34,1"/></g></g>
</svg><svg class="abs" style="left:0;top:0" width="1920" height="1080" viewBox="0 0 1920 1080">
<defs>
 <linearGradient id="dbg" x1="0" y1="0" x2="1" y2="0"><stop offset="0" stop-color="#9a9a9a"/><stop offset="0.35" stop-color="#f4f4f4"/><stop offset="1" stop-color="#8d8d8d"/></linearGradient>
 <linearGradient id="blu" x1="0" y1="0" x2="0" y2="1"><stop offset="0" stop-color="#8fd0f0"/><stop offset="1" stop-color="#2f86bd"/></linearGradient>
 <linearGradient id="bluL" x1="0" y1="0" x2="0" y2="1"><stop offset="0" stop-color="#bfe2f3"/><stop offset="1" stop-color="#6fa8c8"/></linearGradient>
 <linearGradient id="bigA" x1="0" y1="0" x2="0" y2="1"><stop offset="0" stop-color="#9fd6f2"/><stop offset="1" stop-color="#2d7fb8"/></linearGradient>
 <linearGradient id="cube" x1="0" y1="0" x2="0" y2="1"><stop offset="0" stop-color="#6cc0ea"/><stop offset="1" stop-color="#2b7db5"/></linearGradient>
</defs>
<path d="M1189.4,320.5 L1306,328.3 L1308.3,381.9 L1191,374 Z" fill="#bcd8ef" stroke="#12b6fa" stroke-width="2.6" stroke-linejoin="round"/>
<path d="M1195,327.6 L1300.5,334.6 L1302,375.6 L1196.5,369.3 Z" fill="none" stroke="#2a72b0" stroke-width="1"/>
<line x1="1243" y1="330.7" x2="1244.6" y2="371.7" stroke="#2a72b0" stroke-width="1"/>
<path d="M1212.3,340.2 L1232,341.3 L1226.5,359.5 L1208.3,357.5 Z" fill="none" stroke="#1d3b55" stroke-width="1.6"/>
<g fill="none" stroke="#1d3b55" stroke-width="1.9"><ellipse cx="1260.3" cy="352.6" rx="4.6" ry="9.1"/><path d="M1289.5,345.3 L1282.3,344.9 L1281.8,353.2 C1284,351.6 1290,352 1290.2,358.2 C1290.4,363.5 1284.5,365.6 1280.8,362.3"/></g><rect x="1271.8" y="360.6" width="2.3" height="2.3" fill="#1d3b55"/>
<path d="M1233.5,371.7 L1247,372.4 L1240.6,385 Z" fill="#1a2e40"/>
<line x1="1240.6" y1="385" x2="1242.2" y2="400.8" stroke="#333" stroke-width="1"/>
<line x1="1195.4" y1="372.6" x2="1138.7" y2="441.9" stroke="#5cc8f4" stroke-width="4.5"/>
<line x1="1195.4" y1="372.6" x2="1138.7" y2="441.9" stroke="#1a9ee8" stroke-width="2.4"/>
<line x1="1195.4" y1="372.6" x2="1138.7" y2="441.9" stroke="#e8f8ff" stroke-width="0.8"/>
<line x1="1138.7" y1="441.9" x2="1085" y2="514" stroke="#22d6f0" stroke-width="1.3"/>
<line x1="1120" y1="470" x2="1107" y2="487" stroke="#5cc8f4" stroke-width="4"/><line x1="1120" y1="470" x2="1107" y2="487" stroke="#1a9ee8" stroke-width="2"/>
<path d="M1078.9,520.6 L1084.4,505.6 L1093,514.3 Z" fill="#2f7faa" stroke="#22e0f4" stroke-width="1.3" stroke-linejoin="round"/><path d="M1080,518 L1086,509 M1080,518 L1089,512" stroke="#1a4a70" stroke-width="0.8"/>
<circle cx="1197.3" cy="368.5" r="6.2" fill="#fff" stroke="#3a3a3a" stroke-width="1.1"/>
<circle cx="1250.9" cy="402.4" r="20.5" fill="#000" fill-opacity="0.055"/>
<path d="M1222.5,400.8 L1261.1,404.7 L1261.9,444.1 L1224.9,441.7 Z" fill="none" stroke="#262626" stroke-width="1"/>
<path d="M1237,433 L1242.8,413.6 L1249,433 M1239,426.5 L1247,426.5" fill="none" stroke="#262626" stroke-width="1.8"/>
<circle cx="1250.9" cy="401.6" r="8.5" fill="#fff" stroke="#444" stroke-width="1.2"/>
<g fill="none" stroke="#262626" stroke-width="1.9"><ellipse cx="1265.8" cy="417.7" rx="3.9" ry="8.9"/><ellipse cx="1284.3" cy="412" rx="3.7" ry="4.6"/><ellipse cx="1284.3" cy="422.3" rx="4.3" ry="5.3"/></g><rect x="1274.8" y="424.5" width="2.3" height="2.3" fill="#262626"/>
<path d="M1265.8,433.9 L1294.2,435.4 M1265.8,433.9 L1280.8,463 L1310.7,404 L1328,404.3" fill="none" stroke="#262626" stroke-width="1"/>
<circle cx="1245.3" cy="272.2" r="8.8" fill="#fff" stroke="#3a3a3a" stroke-width="1.5"/>
<path d="M1235.5,262.5 L1217,257 M1217,257 L1223,252 M1217,257 L1222,263" fill="none" stroke="#fafafa" stroke-width="1.2"/>
<path d="M1458,398.5 L1458,416 L1462,412.3 L1465,418.5 L1467.5,417.3 L1464.6,411.3 L1469.5,411 Z" fill="#fff" stroke="#222" stroke-width="1" stroke-linejoin="round"/>
<rect x="1487.6" y="272.3" width="97" height="88" rx="6" fill="#ebebeb" stroke="#8c8c8c" stroke-width="1"/>
<g transform="translate(1507,292) rotate(-45)"><rect x="-11" y="-3.2" width="19" height="6.4" fill="#5aa8d8" stroke="#222" stroke-width="1.2"/><rect x="8" y="-3.2" width="4" height="6.4" rx="1.5" fill="#333"/><path d="M-11,-3.2 L-16,0 L-11,3.2 Z" fill="#eee" stroke="#222" stroke-width="1"/><path d="M-16,0 L-13.5,-1.5 L-13.5,1.5Z" fill="#222"/></g>
<path d="M1529,286.9 L1541.8,283 L1541.8,296 L1529,299.5 Z" fill="#8fd0ee" stroke="#10507a" stroke-width="1.3"/>
<path d="M1531,290 L1539.5,288 M1532,288 V292 M1538.5,286 V290" stroke="#10507a" stroke-width="0.8"/>
<path d="M1534,294.5 L1540,299 M1537,300.8 L1543,300.8 L1543,296 Z" stroke="#1a1a1a" stroke-width="1.6" fill="#1a1a1a"/>
<ellipse cx="1565.1" cy="292.2" rx="9" ry="5.6" fill="none" stroke="#b5b5b5" stroke-width="1.6"/><circle cx="1566" cy="291.5" r="3.2" fill="#9a9a9a"/>
<line x1="1558.8" y1="298.6" x2="1571" y2="285.4" stroke="#1a1a1a" stroke-width="1.8"/>
<rect x="1500.4" y="312.2" width="12.6" height="12.1" fill="#f6f6f6" stroke="#333" stroke-width="1"/>
<text x="1502.2" y="322.6" font-family="Liberation Sans" font-size="11" fill="#222">A</text>
<path d="M1503.8,329.7 L1510.2,329.7 L1507,324.8 Z" fill="#222"/>
<line x1="1495" y1="336.5" x2="1577" y2="336.5" stroke="#a9a9a9" stroke-width="1"/>
<path d="M1529.1,343.3 L1543.2,343.3 L1536,351.6 Z" fill="#a9aab0"/>
<path d="M1719.5,155.5 L1712,162 L1719.5,168.5" fill="none" stroke="#6a6a6a" stroke-width="2.2"/>
<g stroke="#cfcfcf" stroke-width="0.8" fill="none"><path d="M1779.8,143.1 L1813.4,129.9 L1875.6,134 L1843,147.2 Z"/><path d="M1779.8,143.1 L1782.9,210.4 L1843,216.5 L1878.6,203.2 L1875.6,134"/><path d="M1843,147.2 L1843,216.5"/></g>
<path d="M1812.5,128.5 L1815,128.5 L1816.5,192 L1815.5,192 Z" fill="#5ab4e6"/>
<path d="M1782.9,211.5 L1816.5,197 L1817,199 L1784,214 Z" fill="#ef7060"/>
<path d="M1816.5,197 L1877.6,201.5 L1877.6,205 L1816.5,199 Z" fill="#86c25a"/>
<path d="M1822.6,143.1 L1843,144.5 L1843,173.7 L1821.6,173.7 Z" fill="#d9ccd3"/><path d="M1843,144.5 L1853.2,145.5 L1851,173.7 L1843,173.7 Z" fill="#cbbec6"/>
<path d="M1806,178.5 L1822,172.3 L1851,172.8 L1838,179.5 Z" fill="#ddd2d8"/><path d="M1806,178.5 L1838,179.5 L1838,183 L1806,182.5 Z" fill="#c9bcc4"/><path d="M1838,179.5 L1851,172.8 L1851,176.5 L1838,183 Z" fill="#bfb2ba"/>
<g stroke="#4a6578" stroke-width="4.3" stroke-linecap="butt"><line x1="1808" y1="182" x2="1809.5" y2="208.5"/><line x1="1823" y1="182" x2="1824.5" y2="201.5"/><line x1="1835.5" y1="184" x2="1837" y2="210"/><line x1="1850" y1="177.5" x2="1851" y2="203.5"/><line x1="1806" y1="165.5" x2="1821.5" y2="160.5"/><line x1="1836" y1="167.5" x2="1854.5" y2="162.5"/></g>
<text x="1806" y="122.5" font-family="Liberation Sans" font-weight="bold" font-size="22" fill="#3f9fd8" textLength="14" lengthAdjust="spacingAndGlyphs">Z</text>
<text x="1768" y="221.5" font-family="Liberation Sans" font-weight="bold" font-size="22" fill="#e24c5f" textLength="15" lengthAdjust="spacingAndGlyphs">X</text>
<text x="1883" y="209.5" font-family="Liberation Sans" font-weight="bold" font-size="22" fill="#6aac3a" textLength="14" lengthAdjust="spacingAndGlyphs">Y</text>
<path d="M1859.3,262.3 L1868.4,262.3 L1863.9,268.4 Z" fill="#2a2a2a"/>
<path d="M9,534.5 L15.5,541 L9,547.5" fill="none" stroke="#8a8a8a" stroke-width="4.6" stroke-linecap="round" stroke-linejoin="round"/><path d="M9,534.5 L15.5,541 L9,547.5" fill="none" stroke="#fcfcfc" stroke-width="2.6" stroke-linecap="round" stroke-linejoin="round"/>
<path d="M1182,104 L1189,100 L1196,104 L1196,112 L1189,116 L1182,112 Z" fill="url(#cube)" stroke="#20557a" stroke-width="1"/><path d="M1182,104 L1189,108 L1196,104 M1189,108 L1189,116" fill="none" stroke="#20557a" stroke-width="0.8"/>
<path d="M1212.5,106 L1219.5,113 L1231,100.5" fill="none" stroke="#3a9a1a" stroke-width="2.6"/>
<path d="M592.5,1040 L596.5,1043.5 L600.5,1040" fill="none" stroke="#666" stroke-width="1.2"/>
<line x1="605.5" y1="1032" x2="605.5" y2="1080" stroke="#c5c5c5" stroke-width="1"/>
<line x1="663.2" y1="1038" x2="663.2" y2="1072" stroke="#d0d0d0" stroke-width="1"/>
<line x1="750.5" y1="1038" x2="750.5" y2="1072" stroke="#d0d0d0" stroke-width="1"/>
<line x1="808.3" y1="1038" x2="808.3" y2="1072" stroke="#d0d0d0" stroke-width="1"/>
<line x1="866.5" y1="1038" x2="866.5" y2="1072" stroke="#d0d0d0" stroke-width="1"/>
<line x1="913.7" y1="1038" x2="913.7" y2="1072" stroke="#d0d0d0" stroke-width="1"/>
<line x1="1000.6" y1="1038" x2="1000.6" y2="1072" stroke="#d0d0d0" stroke-width="1"/>
<line x1="1047.1" y1="1032" x2="1047.1" y2="1080" stroke="#b0b0b0" stroke-width="1.2"/>
<path d="M616.1,1045 L616.1,1064 C616.1,1069 637.1,1069 637.1,1064 L637.1,1045 Z" fill="url(#dbg)" stroke="#555" stroke-width="0.9"/>
<ellipse cx="626.6" cy="1045" rx="10.5" ry="3.8" fill="#e6e6e6" stroke="#555" stroke-width="0.9"/>
<path d="M616.1,1051.5 C616.1,1055 637.1,1055 637.1,1051.5 M616.1,1058 C616.1,1061.5 637.1,1061.5 637.1,1058" fill="none" stroke="#666" stroke-width="0.8"/>
<path d="M627,1062.3 L634,1056.5 L634,1060 L643,1060 L643,1065 L634,1065 L634,1068.5 Z" fill="url(#blu)" stroke="#1f5f8f" stroke-width="0.9"/>
<path d="M650.5,1057 L654.5,1057 L652.5,1053 Z" fill="#111"/>
<path d="M673,1049 L688,1044 L698,1049 L698,1062 L684,1068 L673,1062 Z" fill="#e8e8e8" stroke="#555" stroke-width="1"/><path d="M673,1049 L684,1054 L698,1049 M684,1054 L684,1068" fill="none" stroke="#555" stroke-width="0.9"/><path d="M677,1058 L684,1055 L690,1058" fill="none" stroke="#777" stroke-width="0.8"/>
<path d="M689,1056 C689,1049 692,1045 696,1044 L694,1041.5 L699.5,1042.5 L698,1048 L696.5,1046 C694,1048 692,1051 692,1056 Z" fill="#bbb" stroke="#555" stroke-width="0.8"/>
<path d="M735.5,1052.2 L739.6,1052.3 L739.6,1057.7 L735.5,1057.8 L734.8,1059.5 L737.6,1062.5 L733.8,1066.3 L730.8,1063.5 L729.1,1064.2 L729.0,1068.3 L723.6,1068.3 L723.5,1064.2 L721.8,1063.5 L718.8,1066.3 L715.0,1062.5 L717.8,1059.5 L717.1,1057.8 L713.0,1057.7 L713.0,1052.3 L717.1,1052.2 L717.8,1050.5 L715.0,1047.5 L718.8,1043.7 L721.8,1046.5 L723.5,1045.8 L723.6,1041.7 L729.0,1041.7 L729.1,1045.8 L730.8,1046.5 L733.8,1043.7 L737.6,1047.5 L734.8,1050.5 Z" fill="#f2f2f2" stroke="#555" stroke-width="1.1" stroke-linejoin="round"/><circle cx="726.3" cy="1055" r="4.6" fill="#ececec" stroke="#555" stroke-width="1.1"/>
<path d="M759.0,1045 L759.0,1064 C759.0,1069 780.0,1069 780.0,1064 L780.0,1045 Z" fill="url(#dbg)" stroke="#555" stroke-width="0.9"/>
<ellipse cx="769.5" cy="1045" rx="10.5" ry="3.8" fill="#e6e6e6" stroke="#555" stroke-width="0.9"/>
<path d="M759.0,1051.5 C759.0,1055 780.0,1055 780.0,1051.5 M759.0,1058 C759.0,1061.5 780.0,1061.5 780.0,1058" fill="none" stroke="#666" stroke-width="0.8"/>
<path d="M786.5,1062.3 L779.5,1056.5 L779.5,1060 L770.5,1060 L770.5,1065 L779.5,1065 L779.5,1068.5 Z" fill="url(#blu)" stroke="#1f5f8f" stroke-width="0.9"/>
<path d="M794.5,1057 L798.5,1057 L796.5,1053 Z" fill="#111"/>
<g fill="none" stroke="#2f6f99" stroke-width="5.2"><path d="M819.5,1051 A11.5,11.5 0 0 1 828,1043.5"/><path d="M837,1043.8 A11.5,11.5 0 0 1 843,1052"/><path d="M842.5,1059 A11.5,11.5 0 0 1 834,1066.5"/><path d="M826,1066.5 A11.5,11.5 0 0 1 818.5,1058"/></g>
<g fill="none" stroke="#5fb0e0" stroke-width="3.2"><path d="M819.5,1051 A11.5,11.5 0 0 1 828,1043.5"/><path d="M837,1043.8 A11.5,11.5 0 0 1 843,1052"/><path d="M842.5,1059 A11.5,11.5 0 0 1 834,1066.5"/><path d="M826,1066.5 A11.5,11.5 0 0 1 818.5,1058"/></g>
<path d="M827,1040 L832,1043.7 L827,1047.5 Z M847,1051 L843,1056 L839,1051 Z M834.5,1070 L829.5,1066.5 L834.5,1062.5 Z M815,1059.5 L818.5,1054 L822.5,1059.5 Z" fill="#3d8fc4"/>
<path d="M824,1055 L829,1060 L837.5,1050" fill="none" stroke="#222" stroke-width="2.4"/>
<path d="M852.4,1057 L856.4,1057 L854.4,1053 Z" fill="#111"/>
<rect x="884" y="1042" width="19" height="13" fill="#f2f2f2" stroke="#333" stroke-width="1"/><path d="M887,1045 H900 V1052 H887Z" fill="#777"/><rect x="893" y="1052.5" width="7" height="3" fill="#4aa0d8"/>
<rect x="874.5" y="1054" width="19" height="13" fill="#f2f2f2" stroke="#333" stroke-width="1"/><path d="M877.5,1057 H890.5 V1063 H877.5Z" fill="#777"/><rect x="877" y="1064" width="14" height="3" fill="#4aa0d8"/>
<path d="M876,1052 C876,1046 879,1043.5 883,1043.5" fill="none" stroke="#333" stroke-width="1.6"/><path d="M902,1057 C902,1063 899,1066 895,1066" fill="none" stroke="#333" stroke-width="1.6"/>
<path d="M927,1050 C935,1041 951,1044 950,1056 C949.5,1064 944,1067.5 939,1067.5 L937,1063 C942,1062 944,1059 944,1056 C944,1049 935,1047 930.5,1053 L934,1056.5 L922.5,1057.5 L923.5,1045.5 Z" fill="url(#blu)" stroke="#2a6f9f" stroke-width="0.9"/>
<path d="M985.5,1050 C977.5,1041 961.5,1044 962.5,1056 C963,1064 968.5,1067.5 973.5,1067.5 L975.5,1063 C970.5,1062 968.5,1059 968.5,1056 C968.5,1049 977.5,1047 982,1053 L978.5,1056.5 L990,1057.5 L989,1045.5 Z" fill="url(#bluL)" stroke="#7fa9c4" stroke-width="0.9"/>
<circle cx="1023.4" cy="1054.5" r="13.6" fill="#f6f6f6" stroke="#333" stroke-width="1.1"/>
<text x="1016.5" y="1063" font-family="Liberation Sans" font-weight="bold" font-size="21" fill="#2f7fb8">?</text>
<path d="M1071,1041 L1084.5,1054.5 M1059,1055 L1072,1068" fill="none" stroke="#2a6f9f" stroke-width="1.6"/><path d="M1061,1053 L1073,1043" stroke="#222" stroke-width="1.5"/><path d="M1059,1055.5 L1061.5,1049 L1065,1052.5 Z M1075,1041 L1068.5,1043.5 L1072,1047 Z" fill="#222"/>
<rect x="1102" y="1042" width="18" height="17.5" fill="#f6f6f6" stroke="#333" stroke-width="1"/><text x="1104.5" y="1056.5" font-family="Liberation Sans" font-size="15" fill="#222">A</text><path d="M1107,1068 L1115,1068 L1111,1060 Z" fill="#222"/>
<circle cx="1153" cy="1053.5" r="12.3" fill="#f2f2f2" stroke="#333" stroke-width="1.1"/><line x1="1141" y1="1052" x2="1165" y2="1052" stroke="#333" stroke-width="0.9"/><text x="1144" y="1063.5" font-family="Liberation Sans" font-size="10" fill="#222">A1</text><line x1="1137.5" y1="1068" x2="1144" y2="1062" stroke="#333" stroke-width="2"/>
<g fill="none" stroke="#333" stroke-width="0.9"><rect x="1176" y="1045" width="30.5" height="19.5"/><line x1="1176" y1="1054.8" x2="1206.5" y2="1054.8"/><line x1="1186" y1="1045" x2="1186" y2="1064.5"/><line x1="1198" y1="1045" x2="1198" y2="1054.8"/></g><text x="1187" y="1053.5" font-family="Liberation Sans" font-size="8" fill="#222">0.3</text><text x="1187" y="1063" font-family="Liberation Sans" font-size="8" fill="#222">0.2</text><text x="1199.5" y="1053.5" font-family="Liberation Sans" font-size="8" fill="#222">A</text><path d="M1178,1052.5 H1184 M1181,1047 V1052.5" stroke="#222" stroke-width="0.9"/>
<path d="M1218.5,1049 L1225,1068 L1236,1041.5 L1245,1041.5 M1219,1049 L1231,1049" fill="none" stroke="#222" stroke-width="2"/>
<text x="1255" y="1067" font-family="Liberation Serif" font-weight="bold" font-size="34" fill="url(#bigA)" stroke="#1f5f8f" stroke-width="0.7" textLength="30" lengthAdjust="spacingAndGlyphs">A</text>
<circle cx="1315" cy="1051.5" r="10" fill="#f4f4f4" stroke="#333" stroke-width="1.1"/><text x="1311" y="1057" font-family="Liberation Sans" font-size="13" fill="#222">1</text><line x1="1299" y1="1067" x2="1308" y2="1059" stroke="#333" stroke-width="2.2"/>
<path d="M814,1010 L820,1010 L814,1016 Z" fill="#3a8ad0"/>
</svg>
</body></html>
